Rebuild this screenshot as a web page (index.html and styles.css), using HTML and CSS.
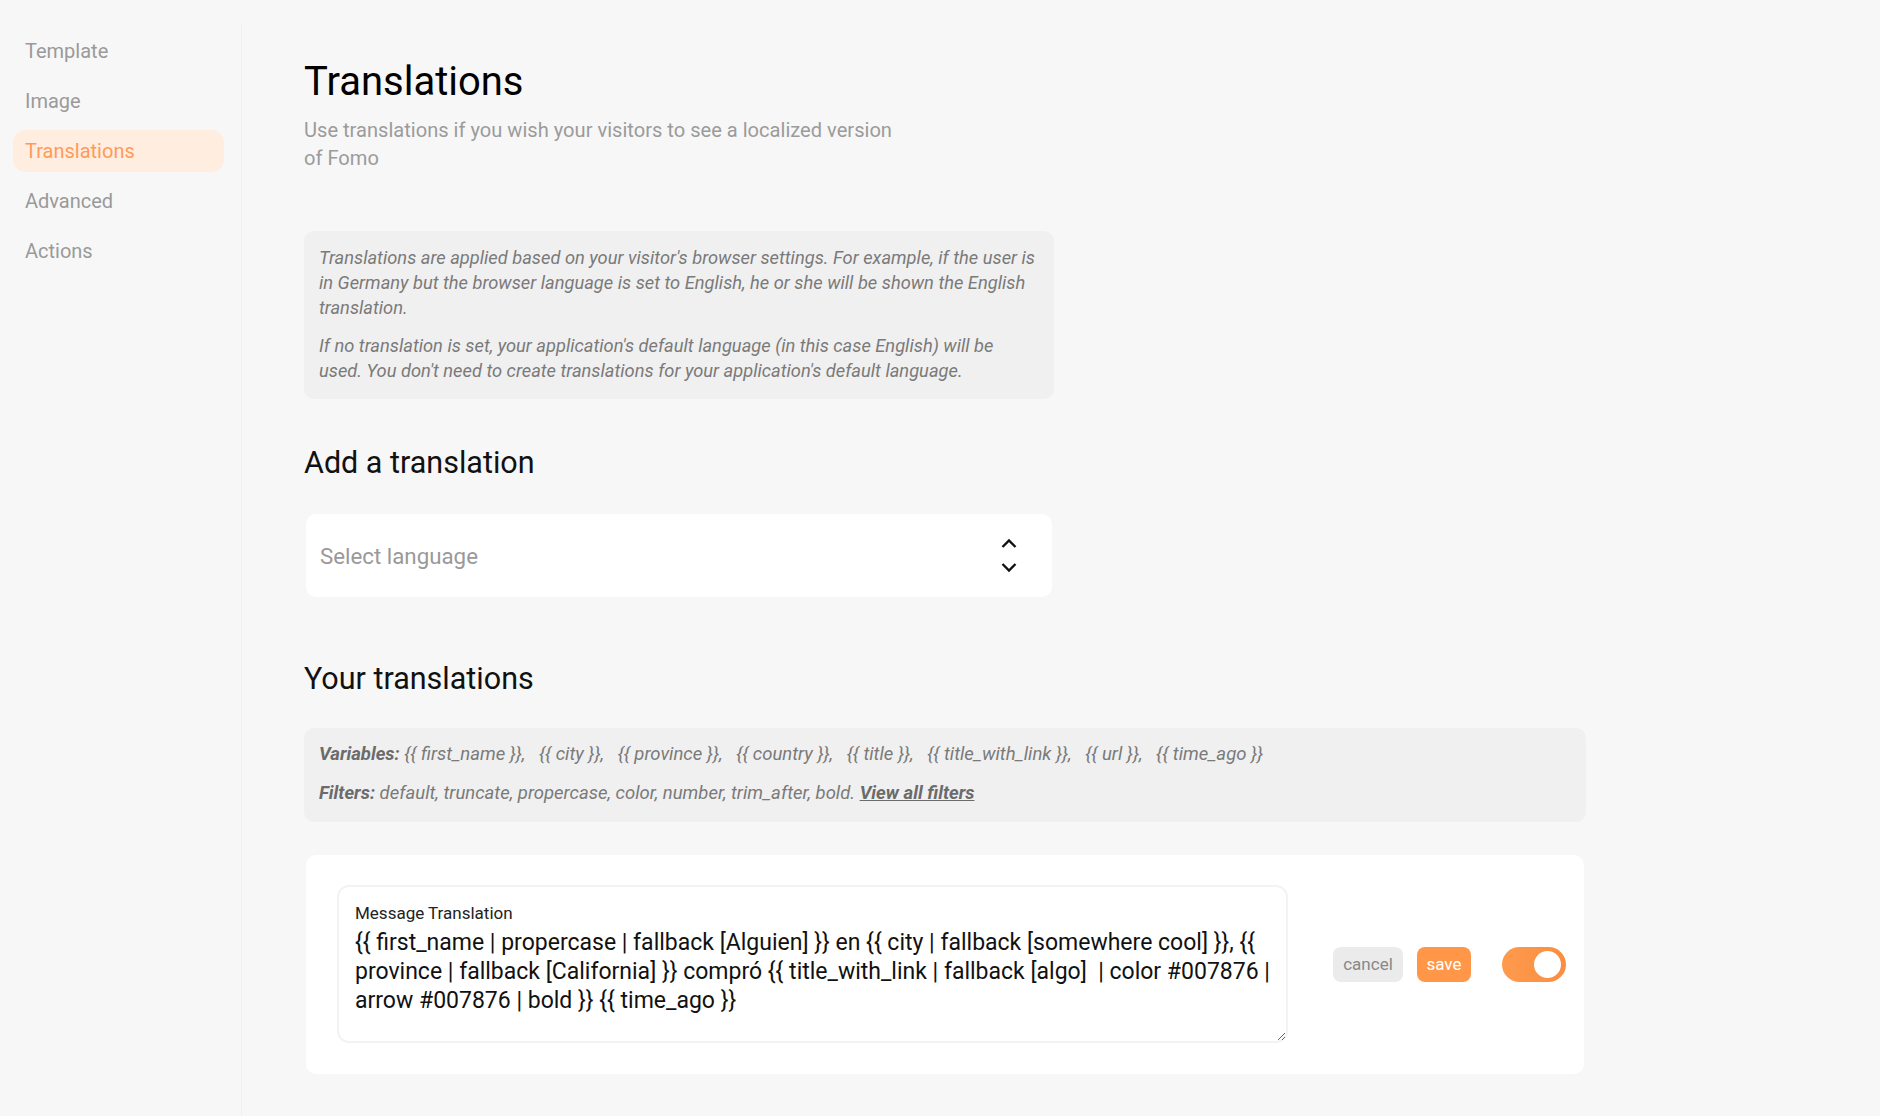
FILE: index.html
```html
<!DOCTYPE html>
<html lang="en">
<head>
    <meta charset="UTF-8">
    <meta name="viewport" content="width=device-width, initial-scale=1.0">
    <title>Translations</title>
    <link rel="stylesheet" href="styles.css">
</head>
<body>
    <nav class="sidebar">
        <a href="#" class="nav-item">Template</a>
        <a href="#" class="nav-item">Image</a>
        <a href="#" class="nav-item active">Translations</a>
        <a href="#" class="nav-item">Advanced</a>
        <a href="#" class="nav-item">Actions</a>
    </nav>

    <main class="content">
        <h1>Translations</h1>
        <p class="subtitle">Use translations if you wish your visitors to see a localized version of Fomo</p>

        <div class="info-box">
            <p>Translations are applied based on your visitor's browser settings. For example, if the user is in Germany but the browser language is set to English, he or she will be shown the English translation.</p>
            <p>If no translation is set, your application's default language (in this case English) will be used. You don't need to create translations for your application's default language.</p>
        </div>

        <h2>Add a translation</h2>
        <div class="select-box">
            <span class="placeholder">Select language</span>
            <svg class="chevrons" width="20" height="35" viewBox="0 0 20 35">
                <path d="M3.5 9 L10 2.5 L16.5 9" fill="none" stroke="#111" stroke-width="2.4"/>
                <path d="M3.5 26 L10 32.5 L16.5 26" fill="none" stroke="#111" stroke-width="2.4"/>
            </svg>
        </div>

        <h2 class="your-title">Your translations</h2>
        <div class="vars-box">
            <p><b>Variables:</b> {{ first_name }},&nbsp;&nbsp; {{ city }},&nbsp;&nbsp; {{ province }},&nbsp;&nbsp; {{ country }},&nbsp;&nbsp; {{ title }},&nbsp;&nbsp; {{ title_with_link }},&nbsp;&nbsp; {{ url }},&nbsp;&nbsp; {{ time_ago }}</p>
            <p><b>Filters:</b> default, truncate, propercase, color, number, trim_after, bold. <a href="#">View all filters</a></p>
        </div>

        <div class="translation-card">
            <div class="field">
                <label for="message">Message Translation</label>
                <textarea id="message" rows="4">{{ first_name | propercase | fallback [Alguien] }} en {{ city | fallback [somewhere cool] }}, {{ province | fallback [California] }} compró {{ title_with_link | fallback [algo]  | color #007876 | arrow #007876 | bold }} {{ time_ago }}</textarea>
            </div>
            <button class="btn btn-cancel">cancel</button>
            <button class="btn btn-save">save</button>
            <span class="toggle"><span class="knob"></span></span>
        </div>
    </main>
</body>
</html>
```

FILE: styles.css
```css
body {
    margin: 0;
    background-color: #f7f7f7;
    font-family: Roboto, "Liberation Sans", sans-serif;
    color: #111;
    display: flex;
    min-height: 100vh;
}

.sidebar {
    width: 242px;
    flex-shrink: 0;
    margin-top: 24px;
    padding-top: 6px;
    border-right: 1px solid #efefef;
    display: flex;
    flex-direction: column;
    gap: 8px;
    box-sizing: border-box;
}

.nav-item {
    display: block;
    margin-left: 13px;
    width: 211px;
    height: 42px;
    line-height: 42px;
    padding-left: 12px;
    box-sizing: border-box;
    border-radius: 13px;
    font-size: 20px;
    color: #9a9a9a;
    text-decoration: none;
}

.nav-item.active {
    background-color: #ffede0;
    color: #ff9a5a;
}

.content {
    padding: 58px 0 0 62px;
    width: 1282px;
}

h1 {
    margin: 0;
    font-size: 40px;
    line-height: 48px;
    font-weight: 400;
    color: #000;
}

.subtitle {
    margin: 10px 0 0;
    max-width: 600px;
    font-size: 20.1px;
    line-height: 28px;
    color: #9b9b9b;
}

.info-box {
    margin-top: 59px;
    width: 750px;
    box-sizing: border-box;
    padding: 14px 15px 16px;
    background-color: #f0f0f0;
    border-radius: 10px;
    font-style: italic;
    font-size: 18.3px;
    line-height: 25px;
    color: #7a7a7a;
}

.info-box p {
    margin: 0;
}

.info-box p + p {
    margin-top: 13px;
}

h2 {
    margin: 47px 0 0;
    font-size: 30.5px;
    line-height: 34px;
    font-weight: 400;
    color: #111;
}

.select-box {
    margin: 34px 2px 0;
    width: 746px;
    height: 83px;
    box-sizing: border-box;
    padding: 0 33px 0 14px;
    background-color: #fff;
    border-radius: 10px;
    display: flex;
    align-items: center;
    justify-content: space-between;
}

.placeholder {
    font-size: 22.3px;
    color: #999;
}

h2.your-title {
    margin-top: 65px;
}

.vars-box {
    margin-top: 32px;
    padding: 14px 15px 17px;
    background-color: #f0f0f0;
    border-radius: 10px;
    font-style: italic;
    font-size: 18.5px;
    line-height: 24px;
    color: #7a7a7a;
}

.vars-box p {
    margin: 0;
}

.vars-box p + p {
    margin-top: 15px;
}

.vars-box b {
    color: #6b6b6b;
}

.vars-box a {
    color: #6b6b6b;
    font-weight: bold;
}

.translation-card {
    margin: 33px 2px 0;
    padding: 30px 16px 31px 31px;
    background-color: #fff;
    border-radius: 10px;
    display: flex;
    align-items: center;
}

.field {
    width: 951px;
    box-sizing: border-box;
    padding: 16px 0 0 16px;
    border: 2px solid #f3f3f3;
    border-radius: 12px;
    display: flex;
    flex-direction: column;
}

.field label {
    font-size: 17px;
    line-height: 20px;
    color: #222;
}

.field textarea {
    margin-top: 5px;
    padding: 0 6px 0 0;
    border: none;
    outline: none;
    resize: vertical;
    font-family: Roboto, "Liberation Sans", sans-serif;
    font-size: 23px;
    line-height: 29px;
    color: #111;
    height: 113px;
    background: transparent;
}

.btn {
    height: 35px;
    border: none;
    border-radius: 8px;
    font-family: Roboto, "Liberation Sans", sans-serif;
    font-size: 17px;
    padding: 0 6px;
    cursor: pointer;
}

.btn-cancel {
    margin-left: 45px;
    width: 70px;
    background-color: #ebebeb;
    color: #888;
}

.btn-save {
    margin-left: 14px;
    width: 54px;
    background-color: #ff9648;
    color: #fff;
}

.toggle {
    margin-left: 31px;
    width: 64px;
    height: 35px;
    border-radius: 18px;
    background: linear-gradient(90deg, #ff9a4c, #f98e42);
    position: relative;
    flex-shrink: 0;
}

.knob {
    position: absolute;
    top: 4px;
    right: 5px;
    width: 27px;
    height: 27px;
    border-radius: 50%;
    background-color: #fff;
}
```
